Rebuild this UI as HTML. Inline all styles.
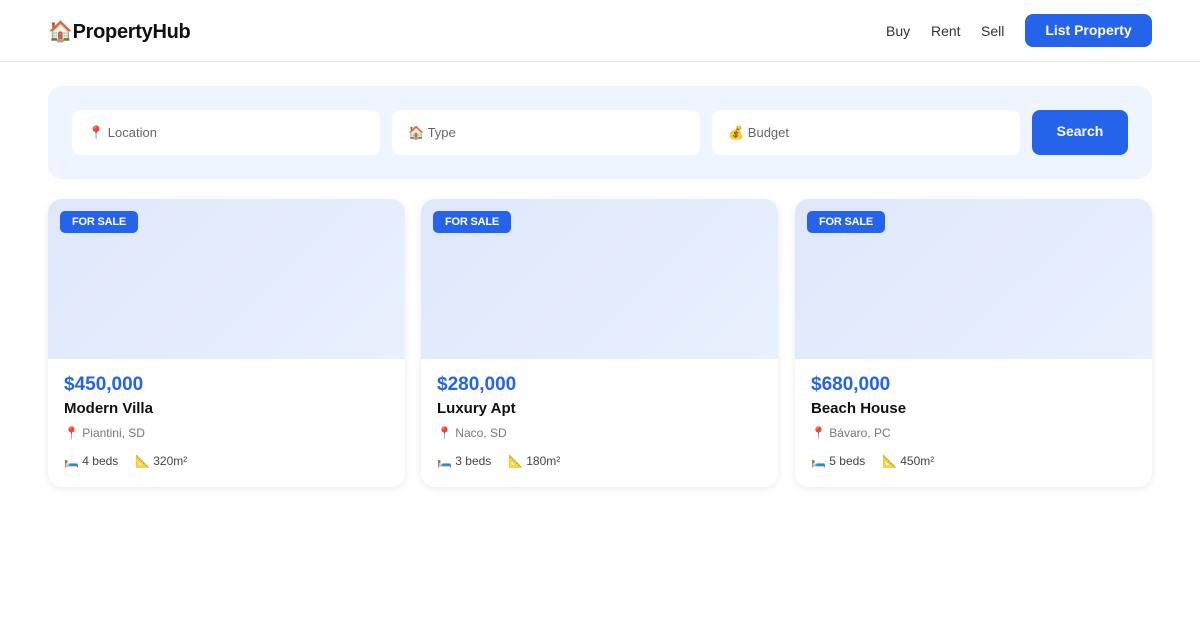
<!DOCTYPE html>
<html><head><style>
*{box-sizing:border-box;margin:0;padding:0}
body{width:1200px;height:630px;background:#fff;font-family:"Liberation Sans","Noto Sans CJK JP",sans-serif;position:relative;overflow:hidden;color:#111}
.hdr{position:absolute;left:0;top:0;width:1200px;height:62px;border-bottom:1px solid #e8e8ea}
.logo{position:absolute;left:48px;top:19px;font-size:20px;font-weight:bold;letter-spacing:-0.3px}
.nav{position:absolute;top:23px;font-size:14px;color:#333}
.btn{position:absolute;left:1025px;top:14px;width:127px;height:33px;background:#2563eb;color:#fff;border-radius:8px;font-weight:bold;font-size:14px;text-align:center;line-height:33px}
.search{position:absolute;left:48px;top:86px;width:1104px;height:93px;background:#eff5fe;border-radius:14px}
.inp{position:absolute;top:24px;width:308px;height:45px;background:#fff;border-radius:8px;font-size:13px;color:#666;padding:15px 16px}
.sbtn{position:absolute;left:984px;top:24px;width:96px;height:45px;background:#2563eb;border-radius:8px;color:#fff;font-weight:bold;font-size:14px;text-align:center;line-height:43px}
.card{position:absolute;top:199px;width:357px;height:288px;border-radius:14px;background:#fff;box-shadow:0 2px 8px rgba(0,0,0,.08);overflow:hidden}
.img{height:160px;background:linear-gradient(135deg,#dfe8fb,#e9f1fe)}
.tag{position:absolute;left:12px;top:12px;background:#2563eb;color:#fff;font-size:11px;font-weight:bold;padding:5px 12px;border-radius:5px;letter-spacing:-0.2px}
.price{position:absolute;left:16px;top:175px;font-size:19px;font-weight:bold;color:#2563eb}
.name{position:absolute;left:16px;top:201px;font-size:15px;font-weight:bold}
.loc{position:absolute;left:16px;top:227px;font-size:12px;color:#777}
.meta{position:absolute;left:16px;top:255px;font-size:12px;color:#444}
</style></head><body>
<div class="hdr">
<div class="logo">🏠PropertyHub</div>
<div class="nav" style="left:886px">Buy</div>
<div class="nav" style="left:931px">Rent</div>
<div class="nav" style="left:981px">Sell</div>
<div class="btn">List Property</div>
</div>
<div class="search">
<div class="inp" style="left:24px">📍 Location</div>
<div class="inp" style="left:344px">🏠 Type</div>
<div class="inp" style="left:664px">💰 Budget</div>
<div class="sbtn">Search</div>
</div>
<div class="card" style="left:48px"><div class="img"></div><div class="tag">FOR SALE</div><div class="price">$450,000</div><div class="name">Modern Villa</div><div class="loc">📍 Piantini, SD</div><div class="meta">🛏️ 4 beds &nbsp;&nbsp;&nbsp; 📐 320m²</div></div>
<div class="card" style="left:421px"><div class="img"></div><div class="tag">FOR SALE</div><div class="price">$280,000</div><div class="name">Luxury Apt</div><div class="loc">📍 Naco, SD</div><div class="meta">🛏️ 3 beds &nbsp;&nbsp;&nbsp; 📐 180m²</div></div>
<div class="card" style="left:795px"><div class="img"></div><div class="tag">FOR SALE</div><div class="price">$680,000</div><div class="name">Beach House</div><div class="loc">📍 Bávaro, PC</div><div class="meta">🛏️ 5 beds &nbsp;&nbsp;&nbsp; 📐 450m²</div></div>
</body></html>
